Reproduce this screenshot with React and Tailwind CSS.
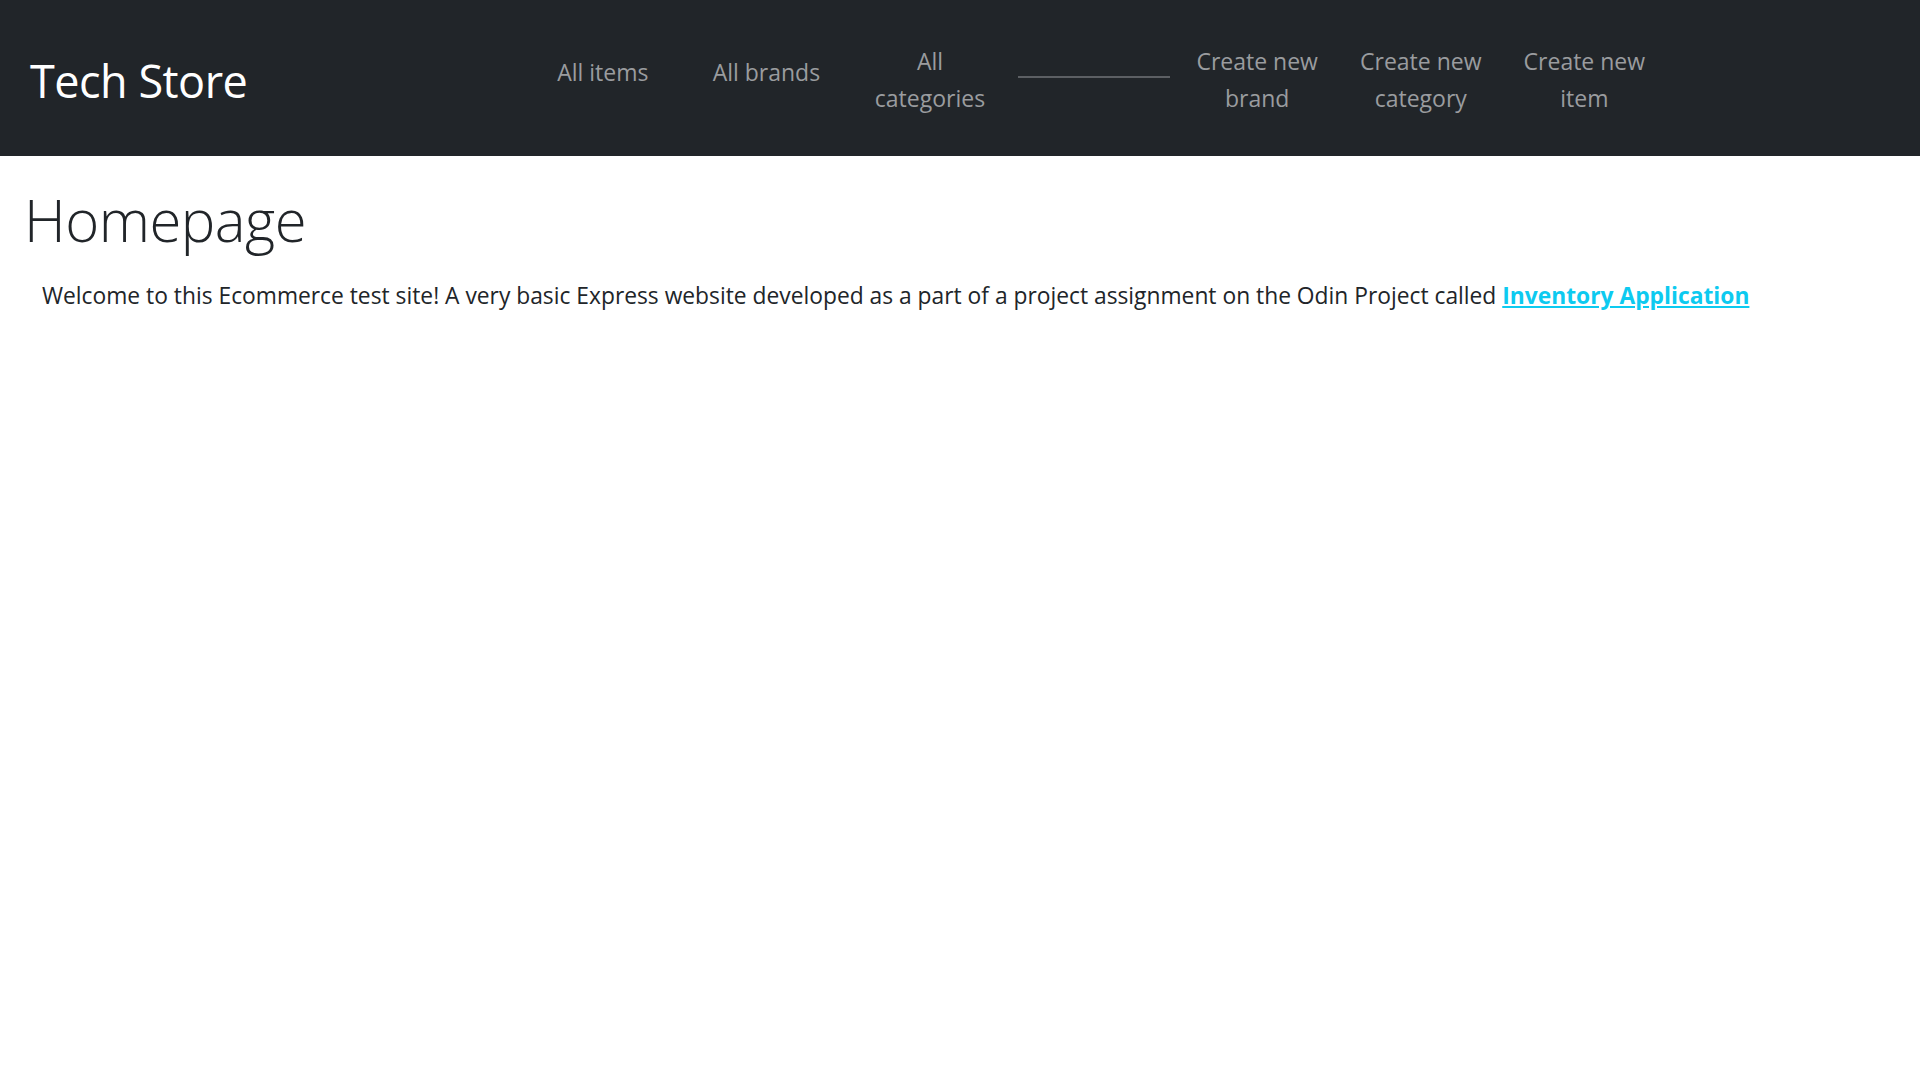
const navLinks = [
  ['All items'],
  ['All brands'],
  ['All', 'categories'],
  null,
  ['Create new', 'brand'],
  ['Create new', 'category'],
  ['Create new', 'item'],
]

export default function App() {
  return (
    <div className="min-h-screen bg-white font-['Open_Sans',sans-serif] text-[#212529]">
      {/* Navbar */}
      <header className="h-[156px] bg-[#212529] flex items-center">
        <div className="w-[521px] pl-[30px] mt-[5px] text-[45px] leading-none text-white tracking-[-0.5px]">Tech Store</div>
        <nav className="flex items-center mt-[3px]">
          {navLinks.map((lines, i) =>
            lines ? (
              <a
                key={i}
                href="#"
                className={`w-[163.6px] text-center text-[23px] leading-[37px] text-[#9a9c9f] hover:text-white ${
                  lines.length === 1 ? 'mb-[14px]' : ''
                }`}
              >
                {lines.map((l, j) => (
                  <div key={j}>{l}</div>
                ))}
              </a>
            ) : (
              <div key={i} className="w-[163.6px] flex justify-center mb-[5px]">
                <div className="w-[152px] h-[2px] bg-[#5c5f63]" />
              </div>
            )
          )}
        </nav>
      </header>

      <main className="px-[24px] pt-[28px]">
        <h1 className="text-[58px] font-light leading-[72px] tracking-[-0.5px]">Homepage</h1>
        <p className="mt-[24px] pl-[18px] text-[22.8px] leading-[32px]">
          Welcome to this Ecommerce test site! A very basic Express website developed as a part of a project assignment on the Odin Project called{' '}
          <a href="#" className="font-bold text-[#0dcaf0] underline">Inventory Application</a>
        </p>
      </main>
    </div>
  )
}
